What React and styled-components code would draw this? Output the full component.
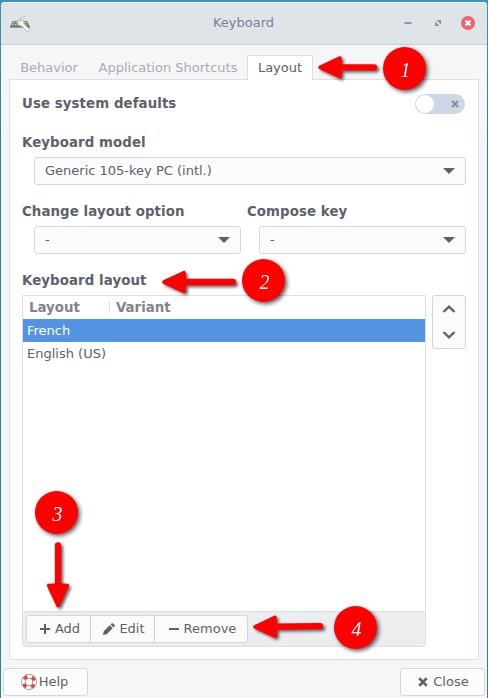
import React from "react";
import styled, { createGlobalStyle } from "styled-components";

const Global = createGlobalStyle`
  *, *::before, *::after { box-sizing: border-box; }
  html, body { margin: 0; padding: 0; background: #3a8eb6; overflow: hidden; }
  button { font: inherit; color: inherit; margin: 0; }
`;

const Desktop = styled.div`
  width: 488px;
  height: 698px;
  padding: 2px 1px 0;
  background: linear-gradient(#3d94bb, #2f7ca6 20%);
  font: 13px/16px "DejaVu Sans", sans-serif;
  color: #5c616c;
`;

const Window = styled.main`
  height: 696px;
  display: flex;
  flex-direction: column;
  background: #f5f6f8;
  border-radius: 4px 4px 0 0;
  overflow: hidden;
`;

const TitleBar = styled.header`
  height: 43px;
  flex: none;
  display: grid;
  grid-template-columns: 90px 1fr 90px;
  align-items: center;
  padding: 0 12px 0 8px;
  background: #dfe4e8;
  border-top: 1px solid #f2f4f6;
  border-bottom: 1px solid #c9d2db;
`;

const Title = styled.h1`
  margin: 0;
  padding: 0 0 2px 3px;
  font-size: 13px;
  font-weight: 400;
  text-align: center;
  color: #7b8194;
`;

const Controls = styled.div`
  display: flex;
  justify-content: flex-end;
  align-items: center;
  gap: 16px;
  padding-bottom: 1px;
`;

const Tabs = styled.nav`
  height: 34px;
  flex: none;
  display: flex;
  align-items: flex-end;
  padding-left: 8px;
  position: relative;
  z-index: 1;
`;

const Tab = styled.div`
  height: 25px;
  width: ${(p) => p.$width}px;
  padding: 4px 0 0 ${(p) => (p.$active ? 0 : 1)}px;
  text-align: center;
  white-space: nowrap;
  color: ${(p) => (p.$active ? "#5c616c" : "#a9acb2")};
  background: ${(p) => (p.$active ? "#fff" : "transparent")};
  border: 1px solid ${(p) => (p.$active ? "#dcdfe3" : "transparent")};
  border-bottom: 0;
  margin-bottom: -1px;
`;

const Page = styled.section`
  height: 581px;
  flex: none;
  margin: 0 8px;
  padding: 14px 12px 0;
  display: flex;
  flex-direction: column;
  background: #fff;
  border: 1px solid #dcdfe3;
`;

const Label = styled.h2`
  margin: 0;
  height: 16px;
  font-size: 13.33px;
  line-height: 16px;
  letter-spacing: 0.09px;
  font-weight: 700;
  white-space: nowrap;
`;

const DefaultsRow = styled.div`
  height: 20px;
  display: flex;
  justify-content: space-between;
  align-items: center;
  padding-right: 1px;
`;

const Switch = styled.div`
  width: 50px;
  height: 20px;
  border-radius: 10px;
  background: #cfd6e6;
  padding: 1px 6px 1px 1px;
  display: flex;
  align-items: center;
  justify-content: space-between;
`;

const Knob = styled.span`
  width: 18px;
  height: 18px;
  border-radius: 50%;
  background: #fff;
`;

const Field = styled.div`
  flex: ${(p) => (p.$width ? "none" : 1)};
  width: ${(p) => (p.$width ? p.$width + "px" : "auto")};
`;

const FieldRow = styled.div`
  display: flex;
  gap: 6px;
  margin-top: ${(p) => p.$top}px;
`;

const Combo = styled.div`
  height: 28px;
  margin: 6px 0 0 12px;
  padding: 0 10px;
  display: flex;
  align-items: center;
  justify-content: space-between;
  background: #fbfbfc;
  border: 1px solid #cfd6e6;
  border-radius: 3px;
  line-height: 26px;
`;

const ListArea = styled.div`
  display: flex;
  gap: 6px;
  margin-top: 6px;
`;

const List = styled.div`
  width: 404px;
  height: 352px;
  display: flex;
  flex-direction: column;
  border: 1px solid #dcdfe3;
  border-radius: 0 0 3px 3px;
`;

const ListHeader = styled.div`
  height: 23px;
  display: flex;
  align-items: center;
  font-size: 13.33px;
  font-weight: 700;
  color: #80848d;
`;

const HeaderCell = styled.span`
  height: 13px;
  line-height: 13px;
  width: ${(p) => p.$width}px;
  padding-left: 6px;
  border-right: 1px solid ${(p) => (p.$last ? "transparent" : "#dcdfe3")};
`;

const ListRow = styled.div`
  height: 23px;
  padding: 0 4px;
  line-height: 23px;
  background: ${(p) => (p.$selected ? "#5294e2" : "#fff")};
  color: ${(p) => (p.$selected ? "#fff" : "#5c616c")};
`;

const Toolbar = styled.div`
  margin-top: auto;
  height: 35px;
  padding: 3px;
  display: flex;
  background: #ebedef;
  border-top: 1px solid #dcdfe3;
`;

const Button = styled.button`
  height: 28px;
  width: ${(p) => p.$width}px;
  padding: 0 ${(p) => p.$pull ?? 0}px 1px ${(p) => p.$shift ?? 0}px;
  display: flex;
  align-items: center;
  justify-content: center;
  gap: ${(p) => p.$gap ?? 4}px;
  background: #fbfbfc;
  border: 1px solid #cfd6e6;
  border-radius: 3px;
  line-height: 16px;
`;

const ToolButton = styled(Button)`
  border-radius: 0;
  margin-right: -1px;
  &:first-child { border-radius: 3px 0 0 3px; }
  &:last-child { border-radius: 0 3px 3px 0; }
`;

const Order = styled.div`
  width: 34px;
  height: 54px;
  display: flex;
  flex-direction: column;
  align-items: center;
  justify-content: space-around;
  background: #fbfbfc;
  border: 1px solid #cfd6e6;
  border-radius: 3px;
`;

const Footer = styled.footer`
  display: flex;
  justify-content: space-between;
  padding: 8px 2px 0;
`;

const Overlay = styled.svg`
  position: absolute;
  inset: 0;
  pointer-events: none;
  filter: drop-shadow(2px 2px 1.5px rgba(0, 0, 0, 0.6));
`;

const Badge = styled.span`
  position: absolute;
  left: ${(p) => p.$x}px;
  top: ${(p) => p.$y}px;
  width: 43px;
  height: 43px;
  border-radius: 50%;
  background: #f00;
  box-shadow: 2px 2px 4px rgba(0, 0, 0, 0.65);
  color: #fff;
  font: italic 22px/45px "Liberation Serif", serif;
  text-align: center;
  padding-left: 2px;
`;

const Digit = styled.span`
  display: block;
  transform: scaleX(0.9);
`;

const AppIcon = () => (
  <svg width="22" height="20" viewBox="0 0 22 20">
    <path d="M12 5q-2-1.500 1-2t4-1.200" fill="none" stroke="#c8ccc9" />
    <path d="M3.500 7h15l2.500 6H1z" fill="#81857f" />
    <path d="M1 12.500h20v1H1z" fill="#5d605c" />
    <path d="M4 8.500h9M3 10.500h9M15 8.500h4" stroke="#d5d7d2" strokeDasharray="1.500 1.500" />
    <path d="M9 5.500l2.500 2V5l3 1.500.5 3 5.500 6-2 2.500-6-6-3-.5L8.500 8z" fill="#f4f4ee" stroke="#a7aaa4" strokeWidth=".7" />
  </svg>
);

const Cross = ({ size, color, width = 2 }) => (
  <svg width={size} height={size} viewBox="0 0 8 8">
    <path d="M1 1l6 6M7 1L1 7" stroke={color} strokeWidth={width} />
  </svg>
);

const Caret = () => (
  <svg width="12" height="6" viewBox="0 0 12 6">
    <path d="M0 0h12L6 6z" fill="#5c616c" />
  </svg>
);

const Chevron = ({ down }) => (
  <svg width="14" height="8" viewBox="0 0 14 8">
    <path d={down ? "M1.500 1L7 6.300 12.500 1" : "M1.500 7L7 1.700 12.500 7"} fill="none" stroke="#5c616c" strokeWidth="2.300" />
  </svg>
);

const Lifebuoy = () => (
  <svg width="16" height="16" viewBox="0 0 16 16">
    <circle cx="8" cy="8" r="5.600" fill="none" stroke="#8b8e8b" strokeWidth="4.600" />
    <circle cx="8" cy="8" r="5.600" fill="none" stroke="#f4f4f2" strokeWidth="3.400" />
    <circle cx="8" cy="8" r="5.600" fill="none" stroke="#e04545" strokeWidth="3.400" strokeDasharray="3.800 4.996" strokeDashoffset="-2.500" />
  </svg>
);

const badges = [
  { n: 1, x: 383, y: 47 },
  { n: 2, x: 242, y: 259 },
  { n: 3, x: 35, y: 491 },
  { n: 4, x: 334, y: 606 },
];

const arrows = [
  { place: "translate(318 67.300)", length: 59 },
  { place: "translate(162 282)", length: 74 },
  { place: "translate(58 607.500) rotate(-90)", length: 65 },
  { place: "translate(253 627) rotate(-.8)", length: 70 },
];

export default function App() {
  return (
    <Desktop>
      <Global />
      <Window>
        <TitleBar>
          <AppIcon />
          <Title>Keyboard</Title>
          <Controls>
            <svg width="14" height="2"><path d="M3.500 1h7" stroke="#8c93a1" strokeWidth="2" /></svg>
            <svg width="14" height="8" viewBox="-3 0 14 8">
              <path d="M2.500 1H7v4.500zM1 2.500V7h4.500z" fill="#8c93a1" />
            </svg>
            <svg width="14" height="14">
              <circle cx="7" cy="7" r="7" fill="#f3606c" />
              <path d="M4.500 4.500l5 5M9.500 4.500l-5 5" stroke="#fff" strokeWidth="2.200" />
            </svg>
          </Controls>
        </TitleBar>
        <Tabs>
          <Tab $width={79}>Behavior</Tab>
          <Tab $width={159}>Application Shortcuts</Tab>
          <Tab $width={66} $active>Layout</Tab>
        </Tabs>
        <Page>
          <DefaultsRow>
            <Label>Use system defaults</Label>
            <Switch><Knob /><Cross size={8} color="#868c9b" /></Switch>
          </DefaultsRow>
          <FieldRow $top={21}>
            <Field>
              <Label>Keyboard model</Label>
              <Combo>Generic 105-key PC (intl.)<Caret /></Combo>
            </Field>
          </FieldRow>
          <FieldRow $top={19}>
            <Field $width={219}>
              <Label>Change layout option</Label>
              <Combo>-<Caret /></Combo>
            </Field>
            <Field>
              <Label>Compose key</Label>
              <Combo>-<Caret /></Combo>
            </Field>
          </FieldRow>
          <FieldRow $top={19}><Label>Keyboard layout</Label></FieldRow>
          <ListArea>
            <List>
              <ListHeader>
                <HeaderCell $width={87}>Layout</HeaderCell>
                <HeaderCell $width={90} $last>Variant</HeaderCell>
              </ListHeader>
              <ListRow $selected>French</ListRow>
              <ListRow>English (US)</ListRow>
              <Toolbar>
                <ToolButton $width={65} $gap={5} $shift={3}>
                  <svg width="10" height="10"><path d="M5 0v10M0 5h10" stroke="#5c616c" strokeWidth="2" /></svg>
                  Add
                </ToolButton>
                <ToolButton $width={65} $gap={4} $shift={3}>
                  <svg width="12" height="12" viewBox="0 0 13 13">
                    <path d="M0 13l.8-4L7.300 2.500l3.200 3.200L4 12.200zM8.200 1.600L9.500.4q.6-.5 1.200 0l1.900 1.900q.5.6 0 1.200l-1.200 1.300z" fill="#5c616c" />
                  </svg>
                  Edit
                </ToolButton>
                <ToolButton $width={94} $gap={5} $shift={3}>
                  <svg width="10" height="2"><path d="M0 1h10" stroke="#5c616c" strokeWidth="2" /></svg>
                  Remove
                </ToolButton>
              </Toolbar>
            </List>
            <Order><Chevron /><Chevron down /></Order>
          </ListArea>
        </Page>
        <Footer>
          <Button $width={85} $gap={2} $pull={2}><Lifebuoy />Help</Button>
          <Button $width={85} $gap={5} $shift={2}><Cross size={10} color="#5c616c" />Close</Button>
        </Footer>
      </Window>
      <Overlay width="488" height="698">
        {arrows.map((a) => (
          <g key={a.place} transform={a.place} fill="#f00" stroke="#f00" strokeLinejoin="round" strokeLinecap="round">
            <path d="M2 0L22-9.300Q23 0 22 9.300z" strokeWidth="3.600" />
            <path d={`M20 0H${a.length - 3}`} strokeWidth="6.300" />
          </g>
        ))}
      </Overlay>
      {badges.map((b) => (
        <Badge key={b.n} $x={b.x} $y={b.y}><Digit>{b.n}</Digit></Badge>
      ))}
    </Desktop>
  );
}
